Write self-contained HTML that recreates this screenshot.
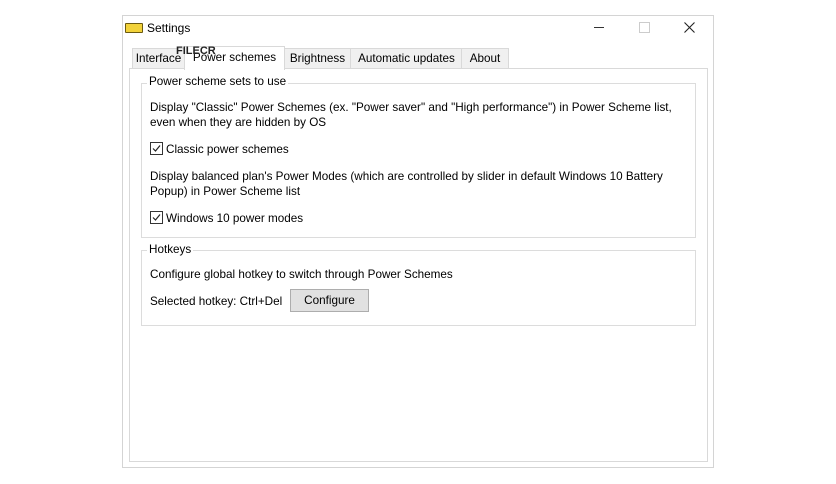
<!DOCTYPE html>
<html><head><style>
body{margin:0;width:836px;height:484px;background:#fff;font-family:"Liberation Sans",sans-serif;font-size:11.7px;color:#000;position:relative;overflow:hidden}
.a{position:absolute;white-space:nowrap}
.win{position:absolute;left:122px;top:15px;width:590px;height:451px;border:1px solid #d4d4d4;background:#fff}
.panel{position:absolute;left:129px;top:68px;width:577px;height:392px;border:1px solid #d9d9d9;background:#fff}
.tab{position:absolute;top:48px;height:19px;border:1px solid #d9d9d9;border-bottom:none;background:#f0f0f0;line-height:19px;text-align:center}
.grp{position:absolute;border:1px solid #dcdcdc}
.cb{display:inline-block;width:11px;height:11px;border:1px solid #333;vertical-align:-2px;margin-right:3px;position:relative;background:#fff}
</style></head><body>
<div class="win"></div>
<div class="a" style="left:125px;top:23px;width:16px;height:8px;background:#f2d23a;border:1px solid #6b5a10;border-radius:1px"></div>
<div class="a" style="left:147px;top:21px;font-size:12px">Settings</div>
<div class="a" style="left:594px;top:27px;width:10px;height:1px;background:#333"></div>
<div class="a" style="left:639px;top:22px;width:9px;height:9px;border:1px solid #ccc"></div>
<svg class="a" style="left:684px;top:22px" width="11" height="11"><path d="M0.5 0.5L10.5 10.5M10.5 0.5L0.5 10.5" stroke="#222" stroke-width="1.1"/></svg>
<div class="panel"></div>
<div class="tab" style="left:132px;width:51px">Interface</div>
<div class="tab" style="left:283px;width:67px">Brightness</div>
<div class="tab" style="left:350px;width:111px">Automatic updates</div>
<div class="tab" style="left:461px;width:46px">About</div>
<div class="tab" style="left:184px;width:99px;top:46px;height:23px;background:#fff;line-height:21px">Power schemes</div>
<div class="a" style="left:176px;top:45px;font-size:11px;font-weight:bold;color:#222">FILECR</div>
<div class="grp" style="left:141px;top:83px;width:553px;height:153px"></div>
<div class="a" style="left:147px;top:75px;background:#fff;padding:0 2px">Power scheme sets to use</div>
<div class="a" style="left:150px;top:100px;line-height:15px">Display "Classic" Power Schemes (ex. "Power saver" and "High performance") in Power Scheme list,<br>even when they are hidden by OS</div>
<div class="a" style="left:150px;top:142px"><span class="cb"><svg width="11" height="11" style="position:absolute;left:0;top:0"><path d="M2 5.5L4.5 8L9 2.5" fill="none" stroke="#222" stroke-width="1.2"/></svg></span>Classic power schemes</div>
<div class="a" style="left:150px;top:169px;line-height:15px">Display balanced plan's Power Modes (which are controlled by slider in default Windows 10 Battery<br>Popup) in Power Scheme list</div>
<div class="a" style="left:150px;top:211px"><span class="cb"><svg width="11" height="11" style="position:absolute;left:0;top:0"><path d="M2 5.5L4.5 8L9 2.5" fill="none" stroke="#222" stroke-width="1.2"/></svg></span>Windows 10 power modes</div>
<div class="grp" style="left:141px;top:250px;width:553px;height:74px"></div>
<div class="a" style="left:147px;top:243px;background:#fff;padding:0 2px">Hotkeys</div>
<div class="a" style="left:150px;top:268px">Configure global hotkey to switch through Power Schemes</div>
<div class="a" style="left:150px;top:295px">Selected hotkey: Ctrl+Del</div>
<div class="a" style="left:290px;top:289px;width:77px;height:21px;border:1px solid #adadad;background:#e1e1e1;text-align:center;line-height:21px">Configure</div>
</body></html>
